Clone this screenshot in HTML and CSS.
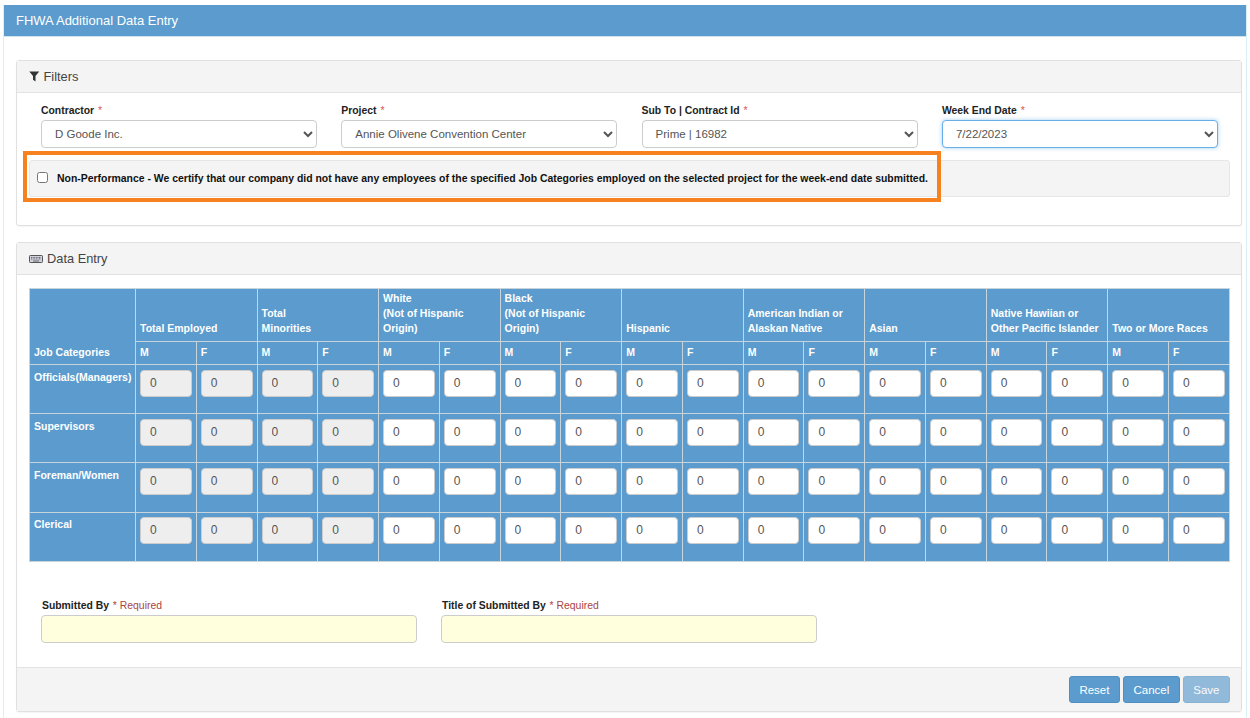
FILE: index.html
```html
<!DOCTYPE html>
<html lang="en">
<head>
<meta charset="utf-8">
<title>FHWA Additional Data Entry</title>
<link rel="stylesheet" href="styles.css">
</head>
<body>
<main class="page">
  <h1 class="page-title">FHWA Additional Data Entry</h1>
  <div class="page-body">
    <section class="panel filters">
      <h2 class="panel-head">
        <svg class="icon" width="11" height="11" viewBox="0 0 11 11"><path d="M0.3 0.6h9.9L6.5 4.9V10.6L4 8.8V4.9z" fill="#333"/></svg>
        Filters
      </h2>
      <div class="filter-body">
        <div class="filter-row">
          <label class="field"><span class="lbl">Contractor <i>*</i></span>
            <select class="ctl"><option>D Goode Inc.</option></select></label>
          <label class="field"><span class="lbl">Project <i>*</i></span>
            <select class="ctl"><option>Annie Olivene Convention Center</option></select></label>
          <label class="field"><span class="lbl">Sub To | Contract Id <i>*</i></span>
            <select class="ctl"><option>Prime | 16982</option></select></label>
          <label class="field"><span class="lbl">Week End Date <i>*</i></span>
            <select class="ctl focus"><option>7/22/2023</option></select></label>
        </div>
        <div class="well">
          <div class="highlight"></div>
          <input class="check" type="checkbox">
          <span class="well-text">Non-Performance - We certify that our company did not have any employees of the specified Job Categories employed on the selected project for the week-end date submitted.</span>
        </div>
      </div>
    </section>

    <section class="panel entry">
      <h2 class="panel-head">
        <svg class="icon key" width="14" height="9" viewBox="0 0 14 9"><rect x="0.5" y="0.5" width="13" height="7" rx="0.8" fill="#d2d2e0" stroke="#555"/><path d="M2 2.5h10M2 4h10" stroke="#666" stroke-dasharray="1 .6"/><path d="M4 6h6" stroke="#666"/></svg>
        Data Entry
      </h2>
      <div class="entry-body">
        <table class="grid">
          <colgroup>
            <col class="c-first">
            <col span="18">
          </colgroup>
          <thead>
            <tr class="r-group">
              <th rowspan="2" class="jobs">Job Categories</th>
              <th colspan="2">Total Employed</th>
              <th colspan="2">Total<br>Minorities</th>
              <th colspan="2">White<br>(Not of Hispanic<br>Origin)</th>
              <th colspan="2">Black<br>(Not of Hispanic<br>Origin)</th>
              <th colspan="2">Hispanic</th>
              <th colspan="2">American Indian or<br>Alaskan Native</th>
              <th colspan="2">Asian</th>
              <th colspan="2">Native Hawiian or<br>Other Pacific Islander</th>
              <th colspan="2">Two or More Races</th>
            </tr>
            <tr class="r-sex">
              <th>M</th><th>F</th><th>M</th><th>F</th><th>M</th><th>F</th><th>M</th><th>F</th><th>M</th><th>F</th><th>M</th><th>F</th><th>M</th><th>F</th><th>M</th><th>F</th><th>M</th><th>F</th>
            </tr>
          </thead>
          <tbody>
            <tr>
              <th class="job">Officials(Managers)</th>
              <td><input class="num" value="0" readonly></td><td><input class="num" value="0" readonly></td><td><input class="num" value="0" readonly></td><td><input class="num" value="0" readonly></td>
              <td><input class="num" value="0"></td><td><input class="num" value="0"></td><td><input class="num" value="0"></td><td><input class="num" value="0"></td><td><input class="num" value="0"></td><td><input class="num" value="0"></td><td><input class="num" value="0"></td><td><input class="num" value="0"></td><td><input class="num" value="0"></td><td><input class="num" value="0"></td><td><input class="num" value="0"></td><td><input class="num" value="0"></td><td><input class="num" value="0"></td><td><input class="num" value="0"></td>
            </tr>
            <tr>
              <th class="job">Supervisors</th>
              <td><input class="num" value="0" readonly></td><td><input class="num" value="0" readonly></td><td><input class="num" value="0" readonly></td><td><input class="num" value="0" readonly></td>
              <td><input class="num" value="0"></td><td><input class="num" value="0"></td><td><input class="num" value="0"></td><td><input class="num" value="0"></td><td><input class="num" value="0"></td><td><input class="num" value="0"></td><td><input class="num" value="0"></td><td><input class="num" value="0"></td><td><input class="num" value="0"></td><td><input class="num" value="0"></td><td><input class="num" value="0"></td><td><input class="num" value="0"></td><td><input class="num" value="0"></td><td><input class="num" value="0"></td>
            </tr>
            <tr class="r-tall">
              <th class="job">Foreman/Women</th>
              <td><input class="num" value="0" readonly></td><td><input class="num" value="0" readonly></td><td><input class="num" value="0" readonly></td><td><input class="num" value="0" readonly></td>
              <td><input class="num" value="0"></td><td><input class="num" value="0"></td><td><input class="num" value="0"></td><td><input class="num" value="0"></td><td><input class="num" value="0"></td><td><input class="num" value="0"></td><td><input class="num" value="0"></td><td><input class="num" value="0"></td><td><input class="num" value="0"></td><td><input class="num" value="0"></td><td><input class="num" value="0"></td><td><input class="num" value="0"></td><td><input class="num" value="0"></td><td><input class="num" value="0"></td>
            </tr>
            <tr class="r-last">
              <th class="job">Clerical</th>
              <td><input class="num" value="0" readonly></td><td><input class="num" value="0" readonly></td><td><input class="num" value="0" readonly></td><td><input class="num" value="0" readonly></td>
              <td><input class="num" value="0"></td><td><input class="num" value="0"></td><td><input class="num" value="0"></td><td><input class="num" value="0"></td><td><input class="num" value="0"></td><td><input class="num" value="0"></td><td><input class="num" value="0"></td><td><input class="num" value="0"></td><td><input class="num" value="0"></td><td><input class="num" value="0"></td><td><input class="num" value="0"></td><td><input class="num" value="0"></td><td><input class="num" value="0"></td><td><input class="num" value="0"></td>
            </tr>
          </tbody>
        </table>
        <div class="submit-row">
          <label class="field sub"><span class="lbl">Submitted By <i>* Required</i></span>
            <input class="ctl req"></label>
          <label class="field sub"><span class="lbl">Title of Submitted By <i>* Required</i></span>
            <input class="ctl req"></label>
        </div>
      </div>
      <footer class="panel-foot">
        <button class="btn">Reset</button>
        <button class="btn">Cancel</button>
        <button class="btn off">Save</button>
      </footer>
    </section>
  </div>
</main>
</body>
</html>
```

FILE: styles.css
```css
* { box-sizing: border-box; }
html, body { margin: 0; height: 100%; overflow: hidden; background: #fff; }
body {
  font-family: "Liberation Sans", Arial, sans-serif;
  font-size: 12px;
  color: #333;
  padding: 5px 3px 0 3px;
}
.page {
  height: 713px;
  border-left: 1px solid #d9f0f4;
  border-right: 1px solid #d9f0f4;
}
.page-title {
  margin: 0;
  height: 32px;
  line-height: 31px;
  padding-left: 12px;
  background: #5b9bcd;
  color: #fff;
  font-size: 13px;
  font-weight: 400;
  border-bottom: 1px solid #cfe3ef;
}
.page-body { padding: 23px 4px 0 12px; }
.panel {
  border: 1px solid #e0e0e0;
  border-radius: 3px;
  background: #fff;
  box-shadow: 0 1px 1px rgba(0,0,0,.04);
}
.filters { height: 166px; margin-bottom: 16px; }
.entry { height: 470px; display: flex; flex-direction: column; }
.panel-head {
  margin: 0;
  height: 32px;
  line-height: 31px;
  padding-left: 12px;
  background: #f4f4f4;
  border-bottom: 1px solid #e2e2e2;
  font-size: 12.8px;
  font-weight: 400;
  color: #444;
}
.icon { vertical-align: -1px; }
.icon.key { vertical-align: -1px; margin-right: 0.5px; }
.filter-body { padding: 11px 11px 0 12px; }
.filter-row {
  display: grid;
  grid-template-columns: repeat(4, 276px);
  gap: 24.3px;
  padding-left: 12px;
}
.field { display: block; }
.lbl {
  display: block;
  height: 16px;
  line-height: 14px;
  font-weight: 700;
  font-size: 10.4px;
  color: #222;
}
.lbl i { font-style: normal; font-weight: 400; color: #d9534f; margin-left: 1px; }
.ctl {
  display: block;
  width: 100%;
  height: 28px;
  padding: 0 9px;
  border: 1px solid #ccc;
  border-radius: 4px;
  background: #fff;
  color: #555;
  font: 11.5px "Liberation Sans", Arial, sans-serif;
}
.ctl.focus {
  border-color: #66afe9;
  box-shadow: 0 0 4px rgba(102,175,233,.6);
}
.well {
  position: relative;
  display: flex;
  align-items: center;
  height: 37px;
  margin-top: 12px;
  padding-left: 7px;
  background: #f4f4f4;
  border: 1px solid #e6e6e6;
  border-radius: 3px;
}
.highlight {
  position: absolute;
  left: -7px;
  top: -10px;
  width: 918px;
  height: 51px;
  border: 4px solid #f7811f;
  pointer-events: none;
}
.check { margin: 0 9px 2px 0; width: 11px; height: 11px; flex: none; }
.well-text { font-size: 10.45px; font-weight: 700; color: #111; white-space: nowrap; }
.entry-body { flex: 1; padding: 13px 11px 0 12px; }
.grid {
  width: 1201px;
  border-collapse: collapse;
  table-layout: fixed;
  background: #5b9bcd;
  color: #fff;
  font-size: 10.5px;
}
.c-first { width: 106px; }
.grid th, .grid td { border: 1px solid #c8d4dc; }
.grid th {
  text-align: left;
  vertical-align: bottom;
  font-weight: 700;
  padding: 0 4px 5px 4px;
  line-height: 15px;
}
.r-group { height: 53px; }
.r-sex { height: 23px; }
.r-sex th { padding-bottom: 4px; }
.grid .jobs { padding-bottom: 4px; }
.grid tbody tr { height: 49px; }
.grid tbody .r-tall { height: 50px; }
.grid .job { vertical-align: top; padding: 5px 0 0 4px; white-space: nowrap; }
.grid td { padding: 5px 4px 0; vertical-align: top; }
.grid .r-last .job, .grid .r-last td { padding-top: 4px; }
.num {
  display: block;
  width: 100%;
  height: 27px;
  padding: 0 9px 2px;
  border: 1px solid #ccc;
  border-radius: 4px;
  background: #fff;
  color: #555;
  font: 12px "Liberation Sans", Arial, sans-serif;
}
.num[readonly] { background: #eee; }
.submit-row {
  display: grid;
  grid-template-columns: repeat(2, 376px);
  gap: 24px;
  margin-top: 37px;
  padding-left: 12px;
}
.ctl.req { background: #ffffdd; }
.sub .lbl { padding-left: 1px; }
.sub .lbl i { color: #a94442; }
.panel-foot {
  margin-top: auto;
  height: 44px;
  display: flex;
  justify-content: flex-end;
  align-items: flex-start;
  gap: 3px;
  padding: 8px 11px 0 0;
  background: #f4f4f4;
  border-top: 1px solid #e2e2e2;
}
.btn {
  height: 27px;
  padding: 0 9.5px;
  border: 1px solid #4f8fc1;
  border-radius: 3px;
  background: #5b9bcd;
  color: #fff;
  font: 11.5px "Liberation Sans", Arial, sans-serif;
}
.btn.off { opacity: .65; }
```
